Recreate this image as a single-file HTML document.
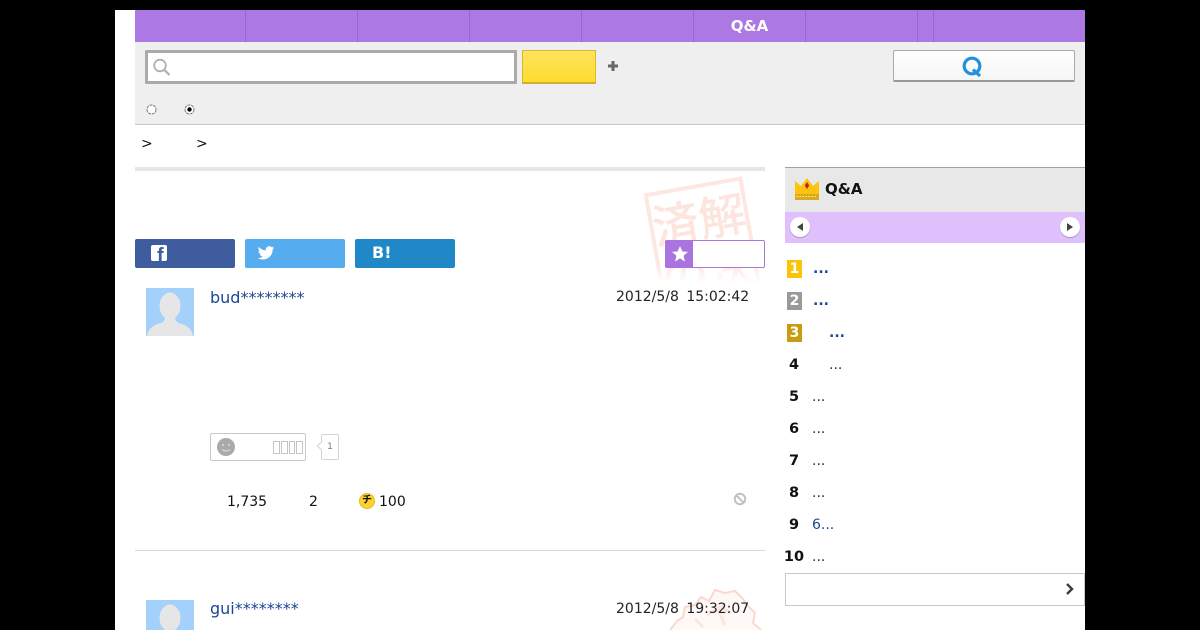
<!DOCTYPE html>
<html lang="ja"><head><meta charset="utf-8"><title>Q&amp;A</title>
<style>
html,body{margin:0;padding:0;background:#000;width:1200px;height:630px;overflow:hidden}
body{font-family:"DejaVu Sans","Noto Sans CJK JP",sans-serif;color:#111;position:relative}
#p{position:absolute;left:115px;top:10px;width:970px;height:620px;background:#fff;overflow:hidden}
.a{position:absolute;white-space:nowrap}
.sep{position:absolute;top:0;width:1px;height:32px;background:#9468cc}
.num{position:absolute;left:667px;width:24px;text-align:center;font-weight:bold;font-size:14.5px;line-height:18px}
.rk{position:absolute;left:672px;width:15px;height:18px;color:#fff;font-weight:bold;font-size:14px;line-height:18px;text-align:center}
.t{position:absolute;font-size:14px;line-height:18px;color:#333}
.b{color:#1a4a9c;font-weight:bold}
.sb{position:absolute;top:229px;width:100px;height:29px;border-radius:2px;color:#fff}
</style></head><body>
<div id="p">
 <div class="a" style="left:20px;top:0;width:950px;height:32px;background:#ac78e4"></div>
 <div class="sep" style="left:130px"></div><div class="sep" style="left:242px"></div><div class="sep" style="left:354px"></div><div class="sep" style="left:466px"></div><div class="sep" style="left:578px"></div><div class="sep" style="left:690px"></div><div class="sep" style="left:802px"></div><div class="sep" style="left:818px"></div>
 <div class="a" style="left:579px;top:0;width:111px;text-align:center;color:#fff;font-weight:bold;font-size:15px;line-height:33px">Q&amp;A</div>

 <div class="a" style="left:20px;top:32px;width:950px;height:82px;background:#efefef;border-bottom:1px solid #c8c8c8"></div>
 <div class="a" style="left:30px;top:40px;width:366px;height:28px;background:#fff;border:3px solid #aaa;border-radius:1px"></div>
 <svg class="a" style="left:37px;top:47px" width="20" height="20" viewBox="0 0 20 20"><circle cx="8" cy="8.500" r="5.800" fill="none" stroke="#b0b0b0" stroke-width="1.800"/><path d="M12.500 13l5 5" stroke="#b0b0b0" stroke-width="2.200" fill="none"/></svg>
 <div class="a" style="left:407px;top:40px;width:72px;height:31px;border:1px solid #d8b830;border-bottom:2px solid #d0b030;background:linear-gradient(#fde45c,#ffdc30)"></div>
 <svg class="a" style="left:492px;top:50px" width="12" height="12" viewBox="0 0 12 12"><path d="M6 1v10M1 6h10" stroke="#666" stroke-width="3"/></svg>
 <div class="a" style="left:778px;top:40px;width:180px;height:29px;border:1px solid #aaa;border-bottom:2px solid #999;border-radius:2px;background:linear-gradient(#fff,#f6f6f6)"></div>
 <svg class="a" style="left:846px;top:46px" width="22" height="22" viewBox="0 0 22 22"><circle cx="11" cy="10" r="7.800" fill="none" stroke="#2290dc" stroke-width="3.200"/><path d="M12 13.500l7 6.500" stroke="#2290dc" stroke-width="3.200" fill="none"/></svg>
 <svg class="a" style="left:30px;top:93px" width="50" height="14" viewBox="0 0 50 14"><circle cx="6.500" cy="6.500" r="4.500" fill="#fff" stroke="#777" stroke-width="1" stroke-dasharray="3 .8"/><circle cx="44.500" cy="6.500" r="4.500" fill="#fff" stroke="#777" stroke-width="1" stroke-dasharray="3 .8"/><circle cx="44.500" cy="6.500" r="2.200" fill="#000"/></svg>

 <div class="a" style="left:26px;top:124px;font-size:14px;line-height:20px">&gt;</div>
 <div class="a" style="left:81px;top:124px;font-size:14px;line-height:20px">&gt;</div>
 <div class="a" style="left:20px;top:157px;width:630px;height:4px;background:#e6e6e6"></div>

 <div class="a" style="left:515px;top:161px;width:140px;height:112px;overflow:hidden;-webkit-mask-image:linear-gradient(#000 82%,transparent 100%);mask-image:linear-gradient(#000 82%,transparent 100%)">
  <div class="a" style="left:23px;top:13px;width:100px;height:118px;border:4px solid #fde8e1;transform:rotate(-10deg);box-sizing:border-box;color:#fde5de;font-size:47px;font-weight:500;line-height:52px;text-align:center;white-space:normal;font-family:'Noto Sans CJK JP',sans-serif"><div style="margin:3px -6px 0;white-space:nowrap">済解</div><div style="margin:0 -6px;white-space:nowrap">の決</div></div>
 </div>

 <div class="sb" style="left:20px;background:#3e5c9e"><div class="a" style="left:16px;top:6px;width:16px;height:16px;background:#fff;border-radius:2px;overflow:hidden"><span class="a" style="left:6px;top:1px;color:#3e5c9e;font:bold 20px/20px 'Liberation Sans',sans-serif">f</span></div></div>
 <div class="sb" style="left:130px;background:#55acee"><svg class="a" style="left:12px;top:5px" width="18" height="18" viewBox="0 0 24 24"><path fill="#fff" d="M23 5c-.8.400-1.700.600-2.600.700 1-.600 1.700-1.500 2-2.500-.900.500-1.900.900-2.900 1.100C18.700 3.400 17.500 3 16.200 3c-2.500 0-4.500 2-4.500 4.500 0 .400 0 .700.100 1C8 8.300 4.700 6.500 2.500 3.800c-.400.700-.600 1.500-.600 2.300 0 1.600.800 2.900 2 3.700-.700 0-1.400-.200-2-.600 0 2.200 1.600 4 3.600 4.400-.700.200-1.400.200-2 .100.600 1.800 2.200 3.100 4.200 3.100C6.100 18 3.600 18.900 1 18.600 3 19.900 5.400 20.600 8 20.600c8.300 0 12.900-6.900 12.900-12.900v-.600C21.700 6.600 22.400 5.800 23 5z"/></svg></div>
 <div class="sb" style="left:240px;background:#2088c6"><span class="a" style="left:17px;top:4px;font-weight:bold;font-size:16px;line-height:20px">B!</span></div>
 <div class="a" style="left:550px;top:230px;width:100px;height:28px;box-sizing:border-box;border:1px solid #a87ad8;border-radius:2px;background:#fff"><div class="a" style="left:-1px;top:-1px;width:28px;height:28px;background:#a974e0;border-radius:2px 0 0 2px"></div><svg class="a" style="left:5px;top:4px" width="18" height="18" viewBox="0 0 18 18"><path fill="#fff" d="M9 1l2.300 5.400 5.700.500-4.400 3.800 1.400 5.800L9 13.400 4 16.500l1.400-5.800L1 6.900l5.700-.500z"/></svg></div>

 <svg class="a" style="left:31px;top:278px" width="48" height="48" viewBox="0 0 48 48"><rect width="48" height="48" fill="#a4d0fc"/><ellipse cx="24" cy="18" rx="10.500" ry="13.500" fill="#e6e6e6"/><path d="M1 48c1-7 6-11 14-13 3-1 4-3 4-7h10c0 4 1 6 4 7 8 2 13 6 14 13z" fill="#e6e6e6"/></svg>
 <div class="a" style="left:95px;top:278px;font-size:16px;line-height:20px;color:#1c4596">bud********</div>
 <div class="a" style="left:501px;top:279px;font-size:14px;line-height:17px;color:#222;word-spacing:3px">2012/5/8 15:02:42</div>

 <div class="a" style="left:95px;top:423px;width:94px;height:26px;border:1px solid #c8c8c8;border-radius:2px"></div>
 <svg class="a" style="left:102px;top:428px" width="18" height="18" viewBox="0 0 18 18"><circle cx="9" cy="9" r="9" fill="#aaa"/><circle cx="6" cy="7" r="1" fill="#ddd"/><circle cx="12" cy="7" r="1" fill="#ddd"/><path d="M5 11.500c2 2 6 2 8 0" stroke="#ddd" fill="none"/></svg>
 <div class="a" style="left:158px;top:431px;width:30px;height:13px;display:flex;gap:1px"><i style="flex:1;border:1px solid #c4c4c4"></i><i style="flex:1;border:1px solid #c4c4c4"></i><i style="flex:1;border:1px solid #c4c4c4"></i><i style="flex:1;border:1px solid #c4c4c4"></i></div>
 <div class="a" style="left:206px;top:424px;width:16px;height:24px;border:1px solid #d4d4d4;border-radius:2px;text-align:center;font-size:9px;line-height:24px;color:#777">1</div>
 <div class="a" style="left:203px;top:433px;width:5px;height:5px;background:#fff;border-left:1px solid #d4d4d4;border-bottom:1px solid #d4d4d4;transform:rotate(45deg)"></div>

 <div class="a" style="left:112px;top:483px;font-size:14px;line-height:18px">1,735</div>
 <div class="a" style="left:194px;top:483px;font-size:14px;line-height:18px">2</div>
 <div class="a" style="left:244px;top:483px;width:14px;height:14px;border:1px solid #e8b820;border-radius:50%;background:#fcd232;text-align:center;font-size:10px;font-weight:bold;line-height:14px">チ</div>
 <div class="a" style="left:264px;top:483px;font-size:14px;line-height:18px">100</div>
 <svg class="a" style="left:618px;top:482px" width="14" height="14" viewBox="0 0 14 14"><circle cx="7" cy="7" r="5.200" fill="none" stroke="#c0c0c0" stroke-width="2"/><path d="M3.300 3.300l7.400 7.400" stroke="#c0c0c0" stroke-width="2"/></svg>

 <div class="a" style="left:20px;top:540px;width:630px;height:1px;background:#d8d8d8"></div>

 <svg class="a" style="left:550px;top:575px" width="100" height="45" viewBox="0 0 100 45"><path d="M5 45L12 36 18 32 20 22 30 20 36 12 44 16 50 5 60 8 70 6 78 14 84 22 90 28 88 38 96 45" fill="#fef8f6" stroke="#fad8cf" stroke-width="2"/><path d="M42 30l14-8 10 6M52 22l8 18M30 34l8 8" stroke="#fce6df" stroke-width="3" fill="none"/></svg>
 <svg class="a" style="left:31px;top:590px" width="48" height="30" viewBox="0 0 48 30"><rect width="48" height="30" fill="#a4d0fc"/><ellipse cx="24" cy="18" rx="10.500" ry="13.500" fill="#e6e6e6"/></svg>
 <div class="a" style="left:95px;top:589px;font-size:16px;line-height:20px;color:#1c4596">gui********</div>
 <div class="a" style="left:501px;top:591px;font-size:14px;line-height:17px;color:#222;word-spacing:3px">2012/5/8 19:32:07</div>

 <div class="a" style="left:670px;top:157px;width:300px;height:45px;background:#e8e8e8;border-top:1px solid #a0a0a0;box-sizing:border-box"></div>
 <svg class="a" style="left:679px;top:166px" width="26" height="25" viewBox="0 0 26 25"><path d="M1 5l6 5 6-8 6 8 6-5v13H1z" fill="#fcc40c"/><rect x="1" y="18" width="24" height="6" fill="#dcaa1c"/><path d="M2.500 20.500h21" stroke="#fff2a8" stroke-dasharray="1.500 1.500"/><path d="M13 6l2.200 3.500L13 13l-2.200-3.500z" fill="#c4201c"/></svg>
 <div class="a" style="left:710px;top:169px;font-weight:bold;font-size:15px;line-height:20px;color:#111">Q&amp;A</div>
 <div class="a" style="left:670px;top:202px;width:300px;height:31px;background:#dfc0fc"></div>
 <div class="a" style="left:675px;top:207px;width:20px;height:20px;border-radius:50%;background:#fff;box-shadow:0 1px 1px #a890c0"></div>
 <div class="a" style="left:682px;top:213px;width:0;height:0;border:4px solid transparent;border-left:0;border-right:6px solid #444"></div>
 <div class="a" style="left:945px;top:207px;width:20px;height:20px;border-radius:50%;background:#fff;box-shadow:0 1px 1px #a890c0"></div>
 <div class="a" style="left:952px;top:213px;width:0;height:0;border:4px solid transparent;border-right:0;border-left:6px solid #444"></div>

 <div class="rk" style="top:250px;background:#fcc408">1</div><div class="t b" style="left:698px;top:250px">...</div>
 <div class="rk" style="top:282px;background:#9a9a9a">2</div><div class="t b" style="left:698px;top:282px">...</div>
 <div class="rk" style="top:314px;background:#c89c10">3</div><div class="t b" style="left:714px;top:314px">...</div>
 <div class="num" style="top:346px">4</div><div class="t" style="left:714px;top:346px">...</div>
 <div class="num" style="top:378px">5</div><div class="t" style="left:697px;top:378px">...</div>
 <div class="num" style="top:410px">6</div><div class="t" style="left:697px;top:410px">...</div>
 <div class="num" style="top:442px">7</div><div class="t" style="left:697px;top:442px">...</div>
 <div class="num" style="top:474px">8</div><div class="t" style="left:697px;top:474px">...</div>
 <div class="num" style="top:506px">9</div><div class="t" style="left:697px;top:506px;color:#1c4596">6...</div>
 <div class="num" style="top:538px">10</div><div class="t" style="left:697px;top:538px">...</div>
 <div class="a" style="left:670px;top:563px;width:300px;height:33px;box-sizing:border-box;border:1px solid #c8c8c8"></div>
 <svg class="a" style="left:949px;top:572px" width="12" height="14" viewBox="0 0 12 14"><path d="M3 2l5 5-5 5" fill="none" stroke="#3c3c3c" stroke-width="2.400"/></svg>
</div>
</body></html>
